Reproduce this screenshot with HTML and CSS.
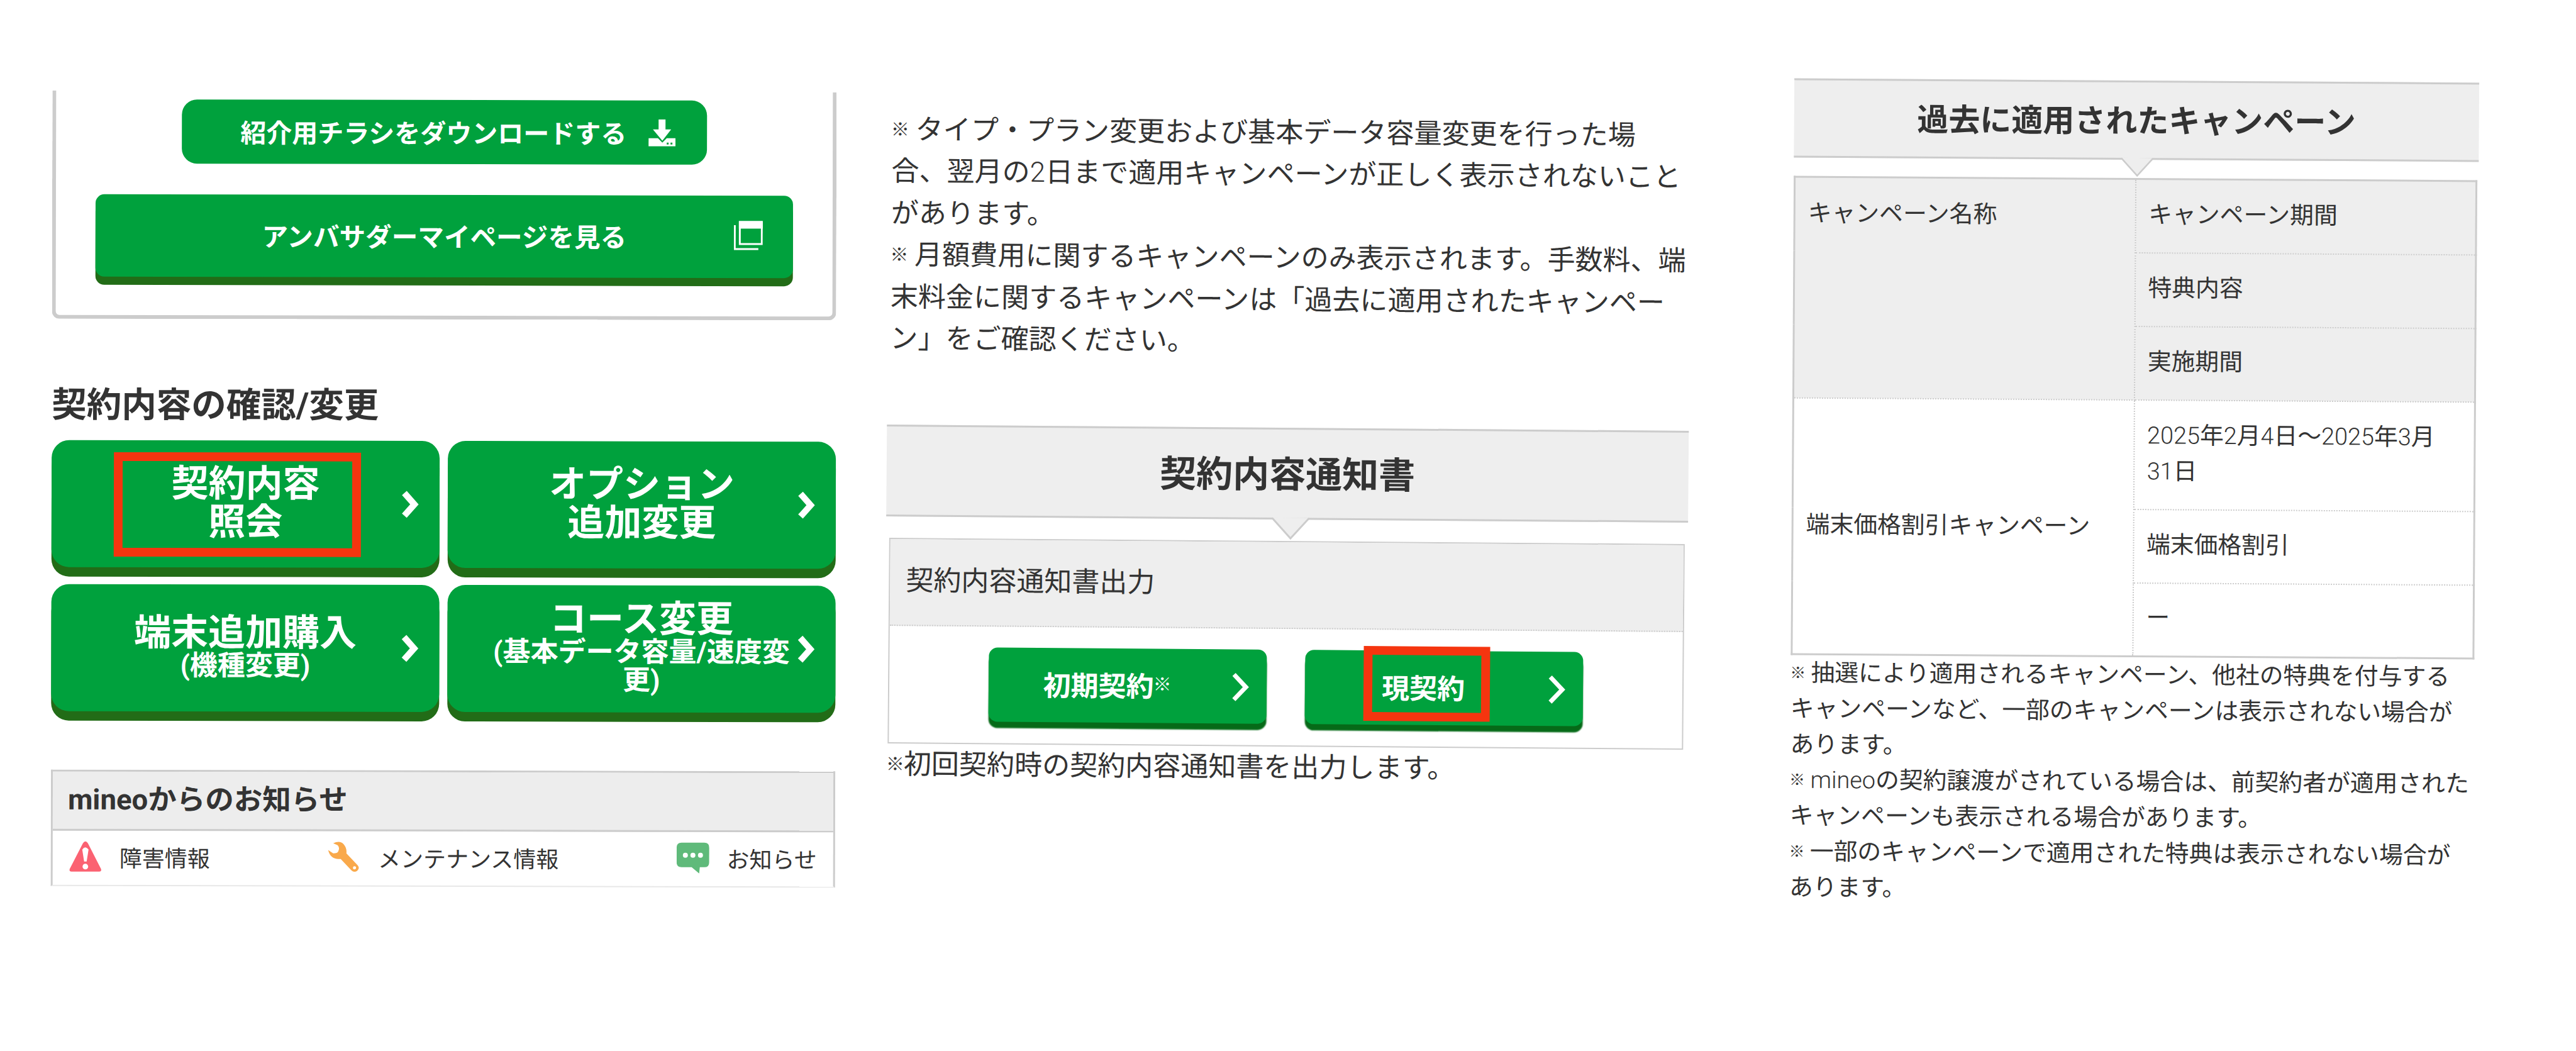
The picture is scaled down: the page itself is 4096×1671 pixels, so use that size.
FILE: index.html
```html
<!DOCTYPE html>
<html lang="ja">
  <head>
    <meta charset="UTF-8" />
    <meta name="viewport" content="width=device-width, initial-scale=1.0" />
    <title>mineo マイページ</title>
    <link rel="stylesheet" href="styles.css">
  </head>
  <body>
    <main class="screens">

      <!-- マイページ -->
      <section class="screen mypage">
        <div class="ambassador">
          <a class="btn-download">
            紹介用チラシをダウンロードする
            <svg class="icon-download" viewBox="0 0 43 43">
              <path d="M16 0h11v16h9L22 34 7 16h9z" />
              <path d="M0 30h15l7 7 7-7h14v13H0z" />
              <path class="dots" d="M29 37h3v3h-3zM35 37h3v3h-3z" />
            </svg>
          </a>
          <a class="btn-mypage">
            アンバサダーマイページを見る
            <svg class="icon-window" viewBox="0 0 46 48">
              <path d="M9.5 2h35v35h-35zM1.5 7v38H39" />
              <path class="bar" d="M8 0.5h38v12H8z" />
            </svg>
          </a>
        </div>

        <h2 class="menu-title">契約内容の確認/変更</h2>
        <div class="menu">
          <a class="menu-btn">
            <span>契約内容<br>照会</span>
            <svg class="arrow" viewBox="0 0 30 46"><path d="M5 5l16 18L5 41" /></svg>
            <i class="mark mark-inquiry"></i>
          </a>
          <a class="menu-btn">
            <span>オプション<br>追加変更</span>
            <svg class="arrow" viewBox="0 0 30 46"><path d="M5 5l16 18L5 41" /></svg>
          </a>
          <a class="menu-btn">
            <span>端末追加購入<small>(機種変更)</small></span>
            <svg class="arrow" viewBox="0 0 30 46"><path d="M5 5l16 18L5 41" /></svg>
          </a>
          <a class="menu-btn">
            <span>コース変更<small>(基本データ容量/速度変<br>更)</small></span>
            <svg class="arrow" viewBox="0 0 30 46"><path d="M5 5l16 18L5 41" /></svg>
          </a>
        </div>

        <div class="news">
          <h3>mineoからのお知らせ</h3>
          <ul>
            <li>
              <svg viewBox="0 0 52 50">
                <path d="M26 1q2 0 4 3l21 41q1 4-3 4H4q-4 0-3-4L22 4q2-3 4-3z" fill="#fb6272" />
                <path d="M21 14q5-7 10 0l-3 19h-4z" fill="#fff" />
                <circle cx="26" cy="41" r="4.5" fill="#fff" />
              </svg>
              障害情報
            </li>
            <li>
              <svg viewBox="0 0 52 50">
                <path d="M9 3q11-5 17 2 5 6 4 14l18 19q4 5-1 9-5 3-9-1L21 28Q5 30 1 14l8 5q7 0 8-3 3-6-1-10z" fill="#f9a94b" />
                <circle cx="43" cy="42" r="2.5" fill="#fff" />
              </svg>
              メンテナンス情報
            </li>
            <li>
              <svg viewBox="0 0 52 50">
                <path d="M8 1h36q8 0 8 8v23q0 8-8 8h-7l-1 10-12-10H8q-8 0-8-8V9q0-8 8-8z" fill="#5fba7a" />
                <path d="M10 21a4 4 0 1 0 8 0 4 4 0 1 0-8 0M22 21a4 4 0 1 0 8 0 4 4 0 1 0-8 0M34 21a4 4 0 1 0 8 0 4 4 0 1 0-8 0" fill="#fff" />
              </svg>
              お知らせ
            </li>
          </ul>
        </div>
      </section>

      <!-- 契約内容通知書 -->
      <section class="screen notice">
        <p class="text">
          <b class="kome">※</b> タイプ・プラン変更および基本データ容量変更を行った場<br>合、翌月の<span class="latin">2</span>日まで適用キャンペーンが正しく表示されないこと<br>があります。<br>
          <b class="kome">※</b> 月額費用に関するキャンペーンのみ表示されます。手数料、端<br>末料金に関するキャンペーンは「過去に適用されたキャンペー<br>ン」をご確認ください。
        </p>

        <h2 class="band">
          契約内容通知書
          <svg class="pointer" viewBox="0 0 60 35"><path d="M0 0L30 33 60 0" /></svg>
        </h2>

        <div class="output">
          <div class="output-head">契約内容通知書出力</div>
          <div class="output-body">
            <a class="output-btn">
              初期契約<b class="kome">※</b>
              <svg class="arrow" viewBox="0 0 30 46"><path d="M4 3l19 20L4 43" /></svg>
            </a>
            <a class="output-btn">
              現契約
              <svg class="arrow" viewBox="0 0 30 46"><path d="M4 3l19 20L4 43" /></svg>
              <i class="mark mark-current"></i>
            </a>
          </div>
        </div>
        <p class="text"><b class="kome">※</b>初回契約時の契約内容通知書を出力します。</p>
      </section>

      <!-- 過去に適用されたキャンペーン -->
      <section class="screen campaign">
        <h2 class="band">
          過去に適用されたキャンペーン
          <svg class="pointer" viewBox="0 0 60 35"><path d="M0 0L30 33 60 0" /></svg>
        </h2>

        <table>
          <tr class="head"><td class="name" rowspan="3">キャンペーン名称</td><td>キャンペーン期間</td></tr>
          <tr class="head"><td>特典内容</td></tr>
          <tr class="head last"><td>実施期間</td></tr>
          <tr class="period">
            <td class="item" rowspan="3">端末価格割引キャンペーン</td>
            <td><span class="latin">2025</span>年<span class="latin">2</span>月<span class="latin">4</span>日～<span class="latin">2025</span>年<span class="latin">3</span>月<br><span class="latin">31</span>日</td>
          </tr>
          <tr><td>端末価格割引</td></tr>
          <tr><td>ー</td></tr>
        </table>

        <p class="text">
          <b class="kome">※</b> 抽選により適用されるキャンペーン、他社の特典を付与する<br>キャンペーンなど、一部のキャンペーンは表示されない場合が<br>あります。<br>
          <b class="kome">※</b> <span class="latin">mineo</span>の契約譲渡がされている場合は、前契約者が適用された<br>キャンペーンも表示される場合があります。<br>
          <b class="kome">※</b> 一部のキャンペーンで適用された特典は表示されない場合が<br>あります。
        </p>
      </section>

    </main>
  </body>
</html>
```
FILE: styles.css
```css
* {
  box-sizing: border-box;
}

body {
  margin: 0;
  background: #fff;
  color: #333;
  font-family: Roboto, "Noto Sans CJK JP", sans-serif;
  font-weight: 400;
}

h2, h3, p, ul {
  margin: 0;
  padding: 0;
}

svg {
  display: block;
  flex: none;
}

.screens {
  display: flex;
  align-items: flex-start;
  height: 1671px;
  overflow: hidden;
  white-space: nowrap;
}

.screen {
  flex: none;
}

/* ※ は小さめに表示 */
.kome {
  margin: 0 -0.04em;
  font-size: 0.66em;
  font-weight: inherit;
  vertical-align: 0.18em;
  line-height: 1;
}

/* 本文中の英数字は細字 */
.latin {
  font-weight: 300;
}

/* 赤枠 */
.mark {
  position: absolute;
  border: 14px solid #f5350f;
}

.arrow {
  position: absolute;
  width: 30px;
  height: 46px;
  fill: none;
  stroke: #fff;
}

/* ---------- マイページ ---------- */
.mypage {
  width: 1247px;
  margin: 145px 0 0 82px;
  transform: rotate(0.12deg);
}

.ambassador {
  display: flex;
  flex-direction: column;
  align-items: center;
  height: 363px;
  padding-top: 14px;
  border: 6px solid #ccc;
  border-top: none;
  border-radius: 0 0 12px 12px;
}

.btn-download,
.btn-mypage {
  display: flex;
  align-items: center;
  color: #fff;
  font-size: 41px;
  font-weight: 700;
  background: #00a13d;
}

.btn-download {
  width: 835px;
  height: 102px;
  padding: 0 0 3px 93px;
  gap: 35px;
  border-radius: 24px;
}

.icon-download {
  width: 43px;
  height: 43px;
  margin-top: 3px;
  fill: #fff;
}

.icon-download .dots {
  fill: #00a13d;
}

.btn-mypage {
  position: relative;
  justify-content: center;
  width: 1109px;
  height: 131px;
  margin-top: 49px;
  padding-bottom: 4px;
  border-radius: 14px;
  box-shadow: 0 13px 0 #226c17;
  font-size: 41.6px;
}

.icon-window {
  position: absolute;
  right: 48px;
  width: 46px;
  height: 48px;
  fill: none;
  stroke: #fff;
  stroke-width: 3;
}

.icon-window .bar {
  fill: #fff;
  stroke: none;
}

.menu-title {
  margin-top: 108px;
  font-size: 55.5px;
  line-height: 60px;
  font-weight: 700;
}

.menu {
  display: grid;
  grid-template-columns: 617px 617px;
  gap: 27px 13px;
  margin-top: 25px;
}

.menu-btn {
  position: relative;
  display: flex;
  align-items: center;
  justify-content: center;
  height: 202px;
  padding-bottom: 5px;
  border-radius: 28px;
  background: #00a13d;
  box-shadow: 0 15px 0 #226c17;
  color: #fff;
  font-size: 59px;
  line-height: 61px;
  font-weight: 700;
  text-align: center;
}

.menu-btn small {
  display: block;
  font-size: 44px;
  line-height: 45px;
}

.menu-btn .arrow {
  right: 31px;
  top: 78px;
  stroke-width: 10;
}

.mark-inquiry {
  left: 99px;
  top: 19px;
  width: 393px;
  height: 166px;
}

.news {
  margin-top: 93px;
  border: 3px solid #ccc;
  border-bottom: 2px solid #e8e8e8;
}

.news h3 {
  height: 94px;
  padding-left: 24px;
  border-bottom: 3px solid #ccc;
  background: #ededed;
  font-size: 45.5px;
  line-height: 90px;
  font-weight: 700;
}

.news ul {
  display: flex;
  justify-content: space-between;
  height: 86px;
  padding: 0 26px 5px;
  list-style: none;
  font-size: 36px;
}

.news li {
  display: flex;
  align-items: center;
  gap: 28px;
}

.news li svg {
  width: 52px;
  height: 50px;
}

/* ---------- 見出し帯 ---------- */
.band {
  position: relative;
  display: flex;
  align-items: center;
  justify-content: center;
  padding-bottom: 6px;
  border-top: 3px solid #ccc;
  border-bottom: 3px solid #ccc;
  background: #eee;
  font-weight: 700;
}

.pointer {
  position: absolute;
  top: 100%;
  left: 50%;
  margin-left: -25px;
  width: 60px;
  height: 35px;
  fill: #eee;
  stroke: #ccc;
  stroke-width: 3;
}

/* ---------- 契約内容通知書 ---------- */
.notice {
  width: 1275px;
  margin: 178px 0 0 81px;
  transform: rotate(0.45deg);
}

.notice .text {
  padding-left: 4px;
  font-size: 44.05px;
  line-height: 66.4px;
}

.notice .band {
  height: 146px;
  margin-top: 104px;
  font-size: 58px;
}

.output {
  margin: 34px 5px 0;
  border: 2px solid #ccc;
}

.output-head {
  height: 138px;
  padding-left: 25px;
  border-bottom: 2px dotted #ccc;
  background: #eee;
  font-size: 44px;
  line-height: 132px;
}

.output-body {
  display: flex;
  justify-content: center;
  gap: 61px;
  height: 185px;
  padding-top: 33px;
}

.output-btn {
  position: relative;
  display: flex;
  align-items: center;
  justify-content: center;
  width: 442px;
  height: 118px;
  padding: 0 66px 4px 0;
  border-radius: 14px;
  background: #00a13d;
  box-shadow: 0 10px 2px #066a18;
  color: #fff;
  font-size: 44px;
  font-weight: 700;
}

.output-btn .arrow {
  right: 26px;
  top: 37px;
  stroke-width: 7;
}

.mark-current {
  left: 93px;
  top: -7px;
  width: 201px;
  height: 119px;
}

/* ---------- 過去に適用されたキャンペーン ---------- */
.campaign {
  width: 1089px;
  margin: 128px 0 0 164px;
  transform: rotate(0.36deg);
}

.campaign .band {
  height: 126px;
  font-size: 50px;
}

.campaign .pointer {
  width: 52px;
  height: 30px;
}

.campaign table {
  width: 1087px;
  margin: 29px 0 0;
  border: 3px solid #ccc;
  border-collapse: collapse;
  table-layout: fixed;
  font-size: 37.8px;
  line-height: 57px;
}

.campaign td {
  width: 50%;
  height: 117px;
  padding: 0 20px 4px;
  border: 2px dotted #ccc;
}

.campaign .head td {
  background: #eee;
}

.campaign .last td {
  border-bottom: none;
}

.campaign td.name {
  padding-top: 28px;
  vertical-align: top;
}

.campaign .period td {
  height: 174px;
}

.campaign .text {
  font-size: 37.8px;
  line-height: 56.8px;
}
```
